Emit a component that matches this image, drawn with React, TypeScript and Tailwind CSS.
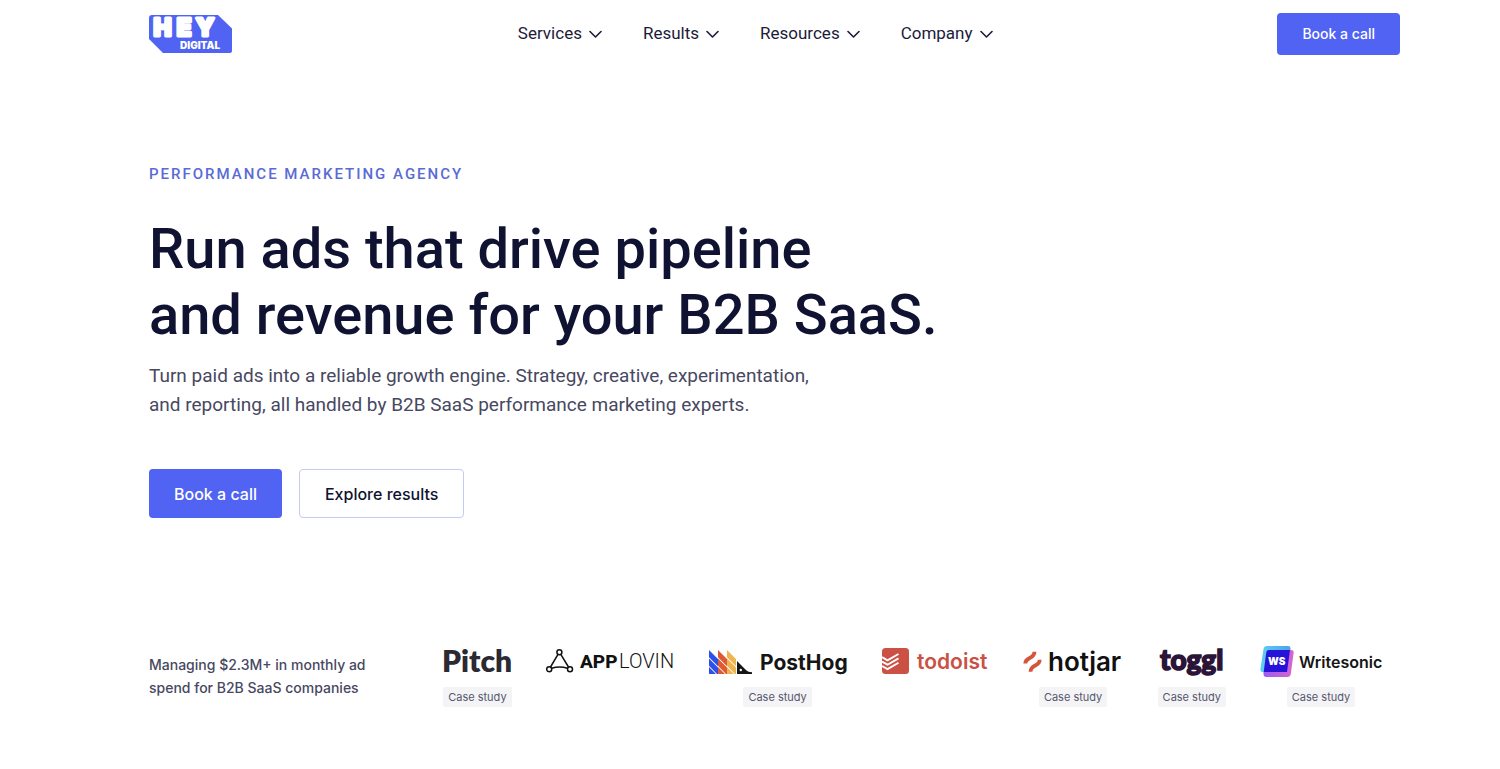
import type { ReactNode } from 'react';

const HeyLogo = () => (
  <svg className="overflow-visible" width="84" height="40" viewBox="0 0 84 40" aria-label="Hey Digital" role="img">
    <path d="M3 1H69L83 14.5V37a2 2 0 0 1-2 2H14L0 25V4a3 3 0 0 1 3-3Z" fill="#5063f2" />
    <g fontFamily="Inter, sans-serif" fontWeight="900" fill="#fff">
      <g fontSize="24" stroke="#fff" strokeWidth="3" strokeLinejoin="round" textAnchor="middle">
        <text x="13.5" y="22">H</text>
        <text x="35" y="22">E</text>
        <text x="56" y="22">Y</text>
      </g>
      <text x="31" y="35" fontSize="10">DIGITAL</text>
    </g>
  </svg>
);

const Chevron = () => (
  <svg width="13" height="9" viewBox="0 0 13 9" fill="none" aria-hidden="true">
    <path d="M1 1.5 6.5 7 12 1.5" stroke="#1c1b3a" strokeWidth="1.6" strokeLinecap="round" strokeLinejoin="round" />
  </svg>
);

const PitchLogo = () => (
  <svg className="overflow-visible" width="68" height="34" viewBox="0 0 68 34" role="img" aria-label="Pitch">
    <text x="-1" y="27" fontFamily="Lato, sans-serif" fontWeight="800" fontSize="30" fill="#2b2a33">Pitch</text>
  </svg>
);

const AppLovinLogo = () => (
  <svg width="128" height="34" viewBox="0 0 128 34" role="img" aria-label="AppLovin">
    <g fill="none" stroke="#111" strokeWidth="1.5">
      <circle cx="13.4" cy="7.2" r="2.5" />
      <circle cx="3.2" cy="24.3" r="2.5" />
      <circle cx="24" cy="24.3" r="2.5" />
      <path d="M12 9.3 4.5 22M14.8 9.3 22.5 22M5.7 23.3Q13.5 20.5 21.5 23.3" />
    </g>
    <g fontFamily="Roboto, sans-serif" fill="#111">
      <text x="34" y="23" fontSize="19" fontWeight="800">APP</text>
      <text x="73" y="23" fontSize="20" fontWeight="300">LOVIN</text>
    </g>
  </svg>
);

const stripes = [
  { x: 1, color: '#2f50e8' },
  { x: 10, color: '#dd5a33' },
  { x: 19, color: '#efb44e' }
];

const PostHogLogo = () => (
  <svg width="140" height="34" viewBox="0 0 140 34" role="img" aria-label="PostHog">
    {stripes.map((stripe) => (
      <g key={stripe.x} transform={`translate(${stripe.x} 5)`} fill={stripe.color}>
        <path d="M0 0 9 9V16.3L0 7.3ZM0 8.4 9 17.4V24H8L0 15.8ZM0 17 7 24H0Z" />
      </g>
    ))}
    <path d="M29 16 38.5 25.5Q40 27 44 27.2V29H29Z" fill="#151515" />
    <circle cx="32.8" cy="25" r="1.2" fill="#fff" />
    <text x="52" y="25" fontFamily="Inter, sans-serif" fontWeight="700" fontSize="21" fill="#151515">PostHog</text>
  </svg>
);

const TodoistLogo = () => (
  <svg width="107" height="34" viewBox="0 0 107 34" role="img" aria-label="todoist">
    <rect x="0" y="3" width="27" height="26" rx="3.5" fill="#cb5144" />
    <path
      d="M0 12.2 5.5 15.3 16.5 9M0 16.6 5.5 19.7 16.5 13.4M0 21 5.5 24.1 16.5 17.8"
      fill="none"
      stroke="#fff"
      strokeWidth="1.9"
    />
    <text x="35" y="24" fontFamily="Inter, sans-serif" fontWeight="600" fontSize="21" fill="#cb5144">todoist</text>
  </svg>
);

const HotjarLogo = () => (
  <svg className="overflow-visible" width="101" height="34" viewBox="0 0 101 34" role="img" aria-label="hotjar">
    <g fill="none" stroke="#d3553d" strokeWidth="3.8">
      <path d="M2.3 18.5C2.3 11.5 11.5 14.5 11.5 6.7" />
      <path d="M7.5 26.7C7.5 19 16.7 21.9 16.7 14.7" />
    </g>
    <text x="25" y="26" fontFamily="Inter, sans-serif" fontWeight="600" fontSize="26" fill="#111">hotjar</text>
  </svg>
);

const TogglLogo = () => (
  <svg className="overflow-visible" width="68" height="34" viewBox="0 0 68 34" role="img" aria-label="toggl">
    <text
      x="2"
      y="25"
      fontFamily="Lato, sans-serif"
      fontWeight="900"
      fontSize="28"
      fill="#2c1338"
      stroke="#2c1338"
      strokeWidth="1.5"
    >
      toggl
    </text>
  </svg>
);

const WritesonicLogo = () => (
  <svg width="122" height="34" viewBox="0 0 122 34" role="img" aria-label="Writesonic">
    <defs>
      <linearGradient id="ws-back" x1="0" y1="0" x2="1" y2="0">
        <stop offset="0" stopColor="#5fd0f2" />
        <stop offset="1" stopColor="#4f9fe8" />
      </linearGradient>
      <linearGradient id="ws-front" x1="0" y1="0" x2="1" y2="0">
        <stop offset="0" stopColor="#9b5cf0" />
        <stop offset="1" stopColor="#d765cf" />
      </linearGradient>
    </defs>
    <path d="M7 1H28Q31 1 30.5 4L27.5 27H3Q0 27 .4 24L3.5 4Q4 1 7 1Z" fill="url(#ws-back)" />
    <path d="M29.5 5H31Q34 5 33.6 8L30.8 29Q30.3 32 27.3 32H6.5Q3.5 32 3.5 29V27H26.5Z" fill="url(#ws-front)" />
    <path d="M9 5H30L27 27H3.7L6.2 8Q6.5 5 9 5Z" fill="#2712d8" />
    <g fontFamily="Inter, sans-serif">
      <text x="16.7" y="20" fontSize="10" fontWeight="900" fill="#fff" textAnchor="middle">WS</text>
      <text x="39" y="23" fontSize="16" fontWeight="600" fill="#151515">Writesonic</text>
    </g>
  </svg>
);

const navItems = ['Services', 'Results', 'Resources', 'Company'];

const clients: { name: string; logo: ReactNode; caseStudy: boolean }[] = [
  { name: 'Pitch', logo: <PitchLogo />, caseStudy: true },
  { name: 'AppLovin', logo: <AppLovinLogo />, caseStudy: false },
  { name: 'PostHog', logo: <PostHogLogo />, caseStudy: true },
  { name: 'todoist', logo: <TodoistLogo />, caseStudy: false },
  { name: 'hotjar', logo: <HotjarLogo />, caseStudy: true },
  { name: 'toggl', logo: <TogglLogo />, caseStudy: true },
  { name: 'Writesonic', logo: <WritesonicLogo />, caseStudy: true }
];

const App = () => {
  return (
    <div className="min-h-screen bg-white pl-[149px] pr-[100px] font-['Inter',sans-serif] text-[#0f1230]">
      <header className="flex items-center justify-between py-[13px]">
        <a href="#">
          <HeyLogo />
        </a>
        <nav className="flex items-center gap-[41px] font-['Roboto',sans-serif] text-[17px] text-[#1c1b3a]">
          {navItems.map((item) => (
            <button key={item} type="button" className="flex items-center gap-[7px]">
              {item}
              <Chevron />
            </button>
          ))}
        </nav>
        <button type="button" className="h-[42px] rounded bg-[#5063f2] px-[25px] text-sm font-medium text-white">
          Book a call
        </button>
      </header>

      <main>
        {/* Hero */}
        <section className="pt-[94px]">
          <p className="font-['Roboto',sans-serif] text-[15px] leading-6 font-medium tracking-[2px] text-[#5a6bd6] uppercase">
            Performance marketing agency
          </p>
          <h1 className="mt-[30px] font-['Roboto',sans-serif] text-[56px] leading-[66px] font-medium">
            Run ads that drive pipeline
            <br />
            and revenue for your B2B SaaS.
          </h1>
          <p className="mt-[13px] font-['Roboto',sans-serif] text-[19px] leading-[29px] text-[#474861]">
            Turn paid ads into a reliable growth engine. Strategy, creative, experimentation,
            <br />
            and reporting, all handled by B2B SaaS performance marketing experts.
          </p>
          <div className="mt-[50px] flex gap-[17px]">
            <button type="button" className="h-[49px] rounded bg-[#5063f2] px-[25px] text-base font-medium text-white">
              Book a call
            </button>
            <button type="button" className="h-[49px] rounded border border-[#c5caf4] px-[25px] text-base font-medium">
              Explore results
            </button>
          </div>
        </section>

        {/* Clients */}
        <section className="mt-[127px] flex items-center justify-between pr-[18px]">
          <p className="text-sm leading-[23px] font-medium text-[#474861]">
            Managing $2.3M+ in monthly ad
            <br />
            spend for B2B SaaS companies
          </p>
          <ul className="flex items-start gap-[34px]">
            {clients.map((client) => (
              <li key={client.name} className="flex flex-col items-center gap-2">
                {client.logo}
                {client.caseStudy && (
                  <a href="#" className="rounded-xs bg-[#f4f4f6] px-[5px] text-[11px] leading-5 text-[#55566c]">
                    Case study
                  </a>
                )}
              </li>
            ))}
          </ul>
        </section>
      </main>
    </div>
  );
};

export default App;
